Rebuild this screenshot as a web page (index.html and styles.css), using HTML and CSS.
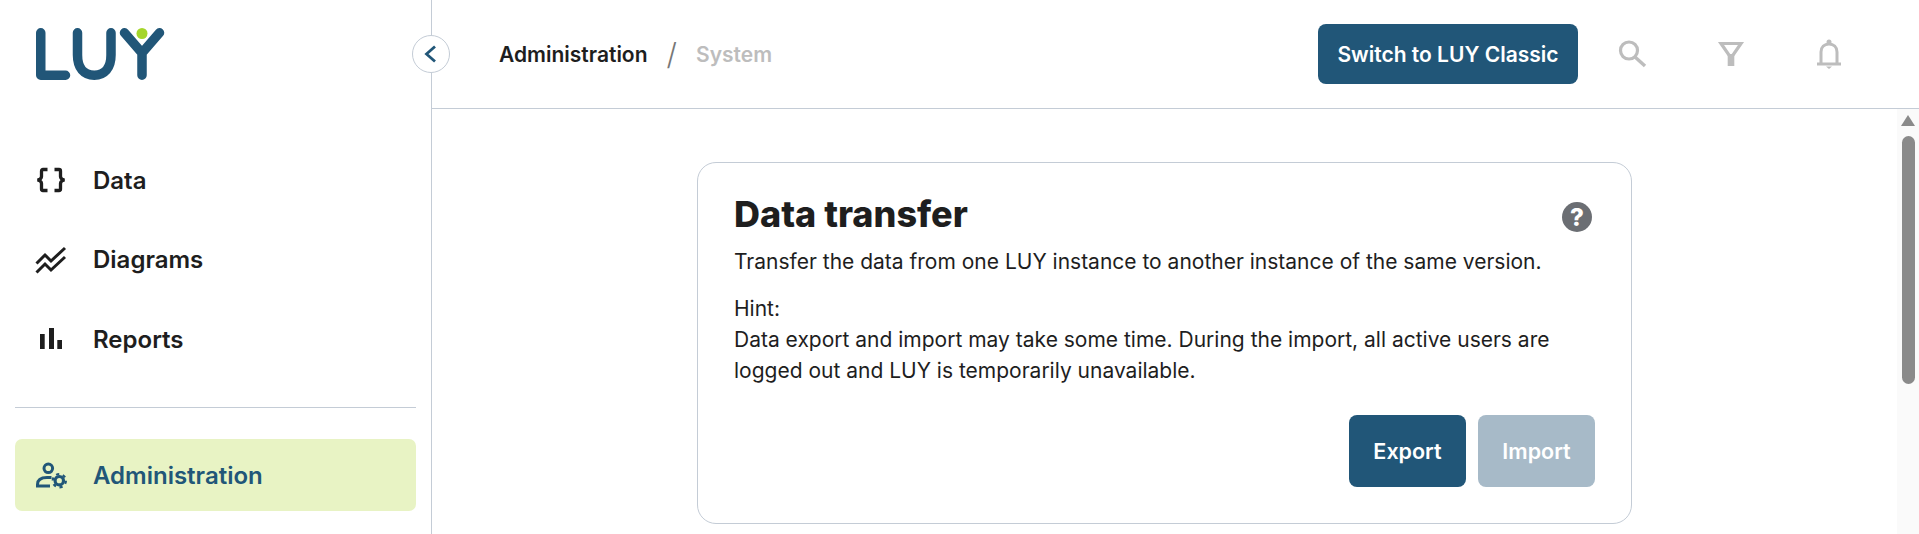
FILE: index.html
```html
<!DOCTYPE html>
<html lang="en">

<head>
    <title>LUY - Administration</title>
    <link rel="stylesheet" href="styles.css">
</head>

<body>
    <div class="app">
        <aside class="sidebar">
            <div class="logo">
                <svg width="130" height="54" viewBox="0 0 130 54">
                    <g fill="none" stroke="#215678" stroke-width="9.5" stroke-linecap="round" stroke-linejoin="round">
                        <path d="M4.750 4.750V47.250H29.500" />
                        <path d="M41.500 4.750V27C41.500 40 48 47.250 58.250 47.250C68.500 47.250 75 40 75 27V4.750" />
                        <path d="M88.500 4.750L106 25L123.500 4.750M106 25V47.250" />
                    </g>
                    <circle cx="106" cy="5.500" r="5.500" fill="#a5d62a" />
                </svg>
            </div>
            <button class="collapse-btn">
                <svg width="18" height="18" viewBox="0 0 18 18">
                    <path d="M13 1.500L4.500 9L13 16.500" fill="none" stroke="#215678" stroke-width="2.800" />
                </svg>
            </button>

            <nav class="nav-list">
                <a class="nav-item">
                    <svg class="nav-icon" viewBox="0 0 32 32">
                        <path d="M12.500 5.500H8C7 5.500 6.500 6 6.500 7V12.500C6.500 14.500 5 15.500 2.500 16C5 16.500 6.500 17.500 6.500 19.500V25C6.500 26 7 26.500 8 26.500H12.500M19.500 5.500H24C25 5.500 25.500 6 25.500 7V12.500C25.500 14.500 27 15.500 29.500 16C27 16.500 25.500 17.500 25.500 19.500V25C25.500 26 25 26.500 24 26.500H19.500" fill="none" stroke="currentColor" stroke-width="3.300" />
                    </svg>
                    <span>Data</span>
                </a>
                <a class="nav-item">
                    <svg class="nav-icon" viewBox="0 0 32 32">
                        <path d="M1.500 19.500L10 11L16 17L30 4M1.500 28.500L10 20L16 26L30 13" fill="none" stroke="currentColor" stroke-width="3" />
                    </svg>
                    <span>Diagrams</span>
                </a>
                <a class="nav-item">
                    <svg class="nav-icon" viewBox="0 0 32 32">
                        <path d="M5 11H9.700V26H5ZM14 5H19V26H14ZM22.300 17H27V26H22.300Z" fill="currentColor" />
                    </svg>
                    <span>Reports</span>
                </a>
            </nav>

            <div class="nav-divider"></div>

            <a class="nav-item nav-item-active">
                <svg class="nav-icon" viewBox="0 0 32 32">
                    <g fill="none" stroke="currentColor">
                        <circle cx="13.300" cy="9.300" r="4.300" stroke-width="3" />
                        <path d="M16.500 18.500H12C6 18.500 2.500 21 2.500 25.500V27H15" stroke-width="3" />
                        <circle cx="24.300" cy="21.700" r="4.200" stroke-width="3.200" />
                        <circle cx="24.300" cy="21.700" r="6.600" stroke-width="2.200" stroke-dasharray="3.200 3.710" />
                    </g>
                </svg>
                <span>Administration</span>
            </a>
        </aside>

        <div class="main">
            <header class="topbar">
                <div class="breadcrumb">
                    <span class="crumb">Administration</span>
                    <span class="crumb-sep">/</span>
                    <span class="crumb-current">System</span>
                </div>
                <button class="btn btn-classic">Switch to LUY Classic</button>
                <div class="topbar-icons">
                    <svg class="top-icon" viewBox="0 0 32 32">
                        <circle cx="13" cy="12.500" r="8.500" fill="none" stroke="currentColor" stroke-width="3.200" />
                        <path d="M19 19L29 28" stroke="currentColor" stroke-width="3.400" />
                    </svg>
                    <svg class="top-icon" viewBox="0 0 32 32">
                        <path d="M6 5.500H26L16 20Z" fill="none" stroke="currentColor" stroke-width="3.200" />
                        <path d="M12.700 16H19.300V28H12.700Z" fill="currentColor" />
                    </svg>
                    <svg class="top-icon" viewBox="0 0 32 32">
                        <path d="M8 26V14C8 9 11.500 6 16 6C20.500 6 24 9 24 14V26M4 26H28" fill="none" stroke="currentColor" stroke-width="3" />
                        <circle cx="16" cy="4" r="2.500" fill="currentColor" />
                        <path d="M13 28.500H19L16 31Z" fill="currentColor" />
                    </svg>
                </div>
            </header>

            <div class="content-row">
                <main class="content">
                    <section class="card">
                        <div class="card-head">
                            <h1>Data transfer</h1>
                            <span class="help-icon">?</span>
                        </div>
                        <p class="card-intro">Transfer the data from one LUY instance to another instance of the same version.</p>
                        <p class="card-hint">Hint:<br>Data export and import may take some time. During the import, all active users are logged out and LUY is temporarily unavailable.</p>
                        <div class="card-actions">
                            <button class="btn btn-action">Export</button>
                            <button class="btn btn-action btn-disabled">Import</button>
                        </div>
                    </section>
                </main>
                <div class="scrollbar">
                    <div class="scroll-arrow"></div>
                    <div class="scroll-thumb"></div>
                </div>
            </div>
        </div>
    </div>
</body>

</html>
```

FILE: styles.css
```css
* {
    box-sizing: border-box;
}

html,
body {
    margin: 0;
    height: 100%;
    overflow: hidden;
}

body {
    font-family: 'Inter', 'Noto Sans', sans-serif;
    color: #1e1e1e;
    background-color: #fff;
}

.app {
    display: flex;
    height: 100%;
}

/* sidebar */
.sidebar {
    position: relative;
    flex: 0 0 432px;
    border-right: 1px solid #c4ccd6;
    padding: 0 15px;
}

.logo {
    height: 144px;
    padding: 28px 0 0 21px;
}

.logo svg {
    display: block;
}

.collapse-btn {
    position: absolute;
    top: 35px;
    right: -19px;
    width: 38px;
    height: 38px;
    padding: 0;
    display: flex;
    align-items: center;
    justify-content: center;
    background-color: #fff;
    border: 1px solid #c4ccd6;
    border-radius: 50%;
}

.nav-list {
    display: flex;
    flex-direction: column;
    gap: 7.500px;
    height: 263px;
}

.nav-item {
    display: flex;
    align-items: center;
    gap: 26px;
    height: 72px;
    padding-left: 20px;
    font-size: 24px;
    font-weight: 600;
    color: #1e1e1e;
}

.nav-icon {
    flex: 0 0 32px;
    width: 32px;
    height: 32px;
}

.nav-divider {
    height: 1px;
    background-color: #c4ccd6;
    margin-bottom: 31px;
}

.nav-item-active {
    background-color: #e8f3c4;
    border-radius: 7px;
    color: #215678;
}

/* header */
.main {
    flex: 1;
    min-width: 0;
    display: flex;
    flex-direction: column;
}

.topbar {
    flex: 0 0 109px;
    display: flex;
    align-items: center;
    padding-left: 67px;
    border-bottom: 1px solid #c4ccd6;
}

.breadcrumb {
    flex: 1;
    display: flex;
    align-items: center;
    font-size: 21px;
    font-weight: 600;
}

.crumb-sep {
    margin: 0 19px;
    font-size: 30px;
    font-weight: 300;
    color: #777;
}

.crumb-current {
    color: #bdbdbd;
}

.btn {
    border: none;
    border-radius: 8px;
    font-family: inherit;
    font-weight: 600;
    color: #fff;
    background-color: #215678;
}

.btn-classic {
    width: 260px;
    height: 60px;
    font-size: 21px;
}

.topbar-icons {
    display: flex;
    gap: 66.500px;
    margin: 0 74px 0 38px;
    color: #bdbdbd;
}

.top-icon {
    width: 32px;
    height: 32px;
}

/* content */
.content-row {
    flex: 1;
    min-height: 0;
    display: flex;
}

.content {
    flex: 1;
    min-width: 0;
    display: flex;
    justify-content: center;
    padding-top: 53px;
}

.card {
    width: 935px;
    height: 362px;
    padding: 29px 36px 28px;
    border: 1px solid #c4ccd6;
    border-radius: 19px;
}

.card-head {
    display: flex;
    align-items: center;
    justify-content: space-between;
    height: 44px;
}

h1 {
    margin: 0;
    font-size: 36px;
    font-weight: 800;
}

.help-icon {
    width: 30px;
    height: 30px;
    margin: 6px 3px 0 0;
    display: flex;
    align-items: center;
    justify-content: center;
    border-radius: 50%;
    background-color: #6b6e73;
    color: #fff;
    font-size: 24px;
    font-weight: 800;
}

.card-intro,
.card-hint {
    margin: 0;
    font-size: 21px;
    line-height: 31px;
}

.card-intro {
    margin-top: 10px;
    margin-bottom: 16px;
}

.card-actions {
    display: flex;
    justify-content: flex-end;
    gap: 12px;
    margin-top: 29px;
}

.btn-action {
    width: 117px;
    height: 72px;
    font-size: 21.500px;
}

.btn-disabled {
    background-color: #a7bac8;
}

/* scrollbar */
.scrollbar {
    flex: 0 0 22px;
    background-color: #fafafa;
    padding-top: 6px;
}

.scroll-arrow {
    width: 0;
    height: 0;
    margin: 0 auto 10px;
    border-left: 7.500px solid transparent;
    border-right: 7.500px solid transparent;
    border-bottom: 11px solid #8a8a8a;
}

.scroll-thumb {
    width: 13px;
    height: 248px;
    margin-left: 5px;
    background-color: #8a8a8a;
    border-radius: 7px;
}
```
